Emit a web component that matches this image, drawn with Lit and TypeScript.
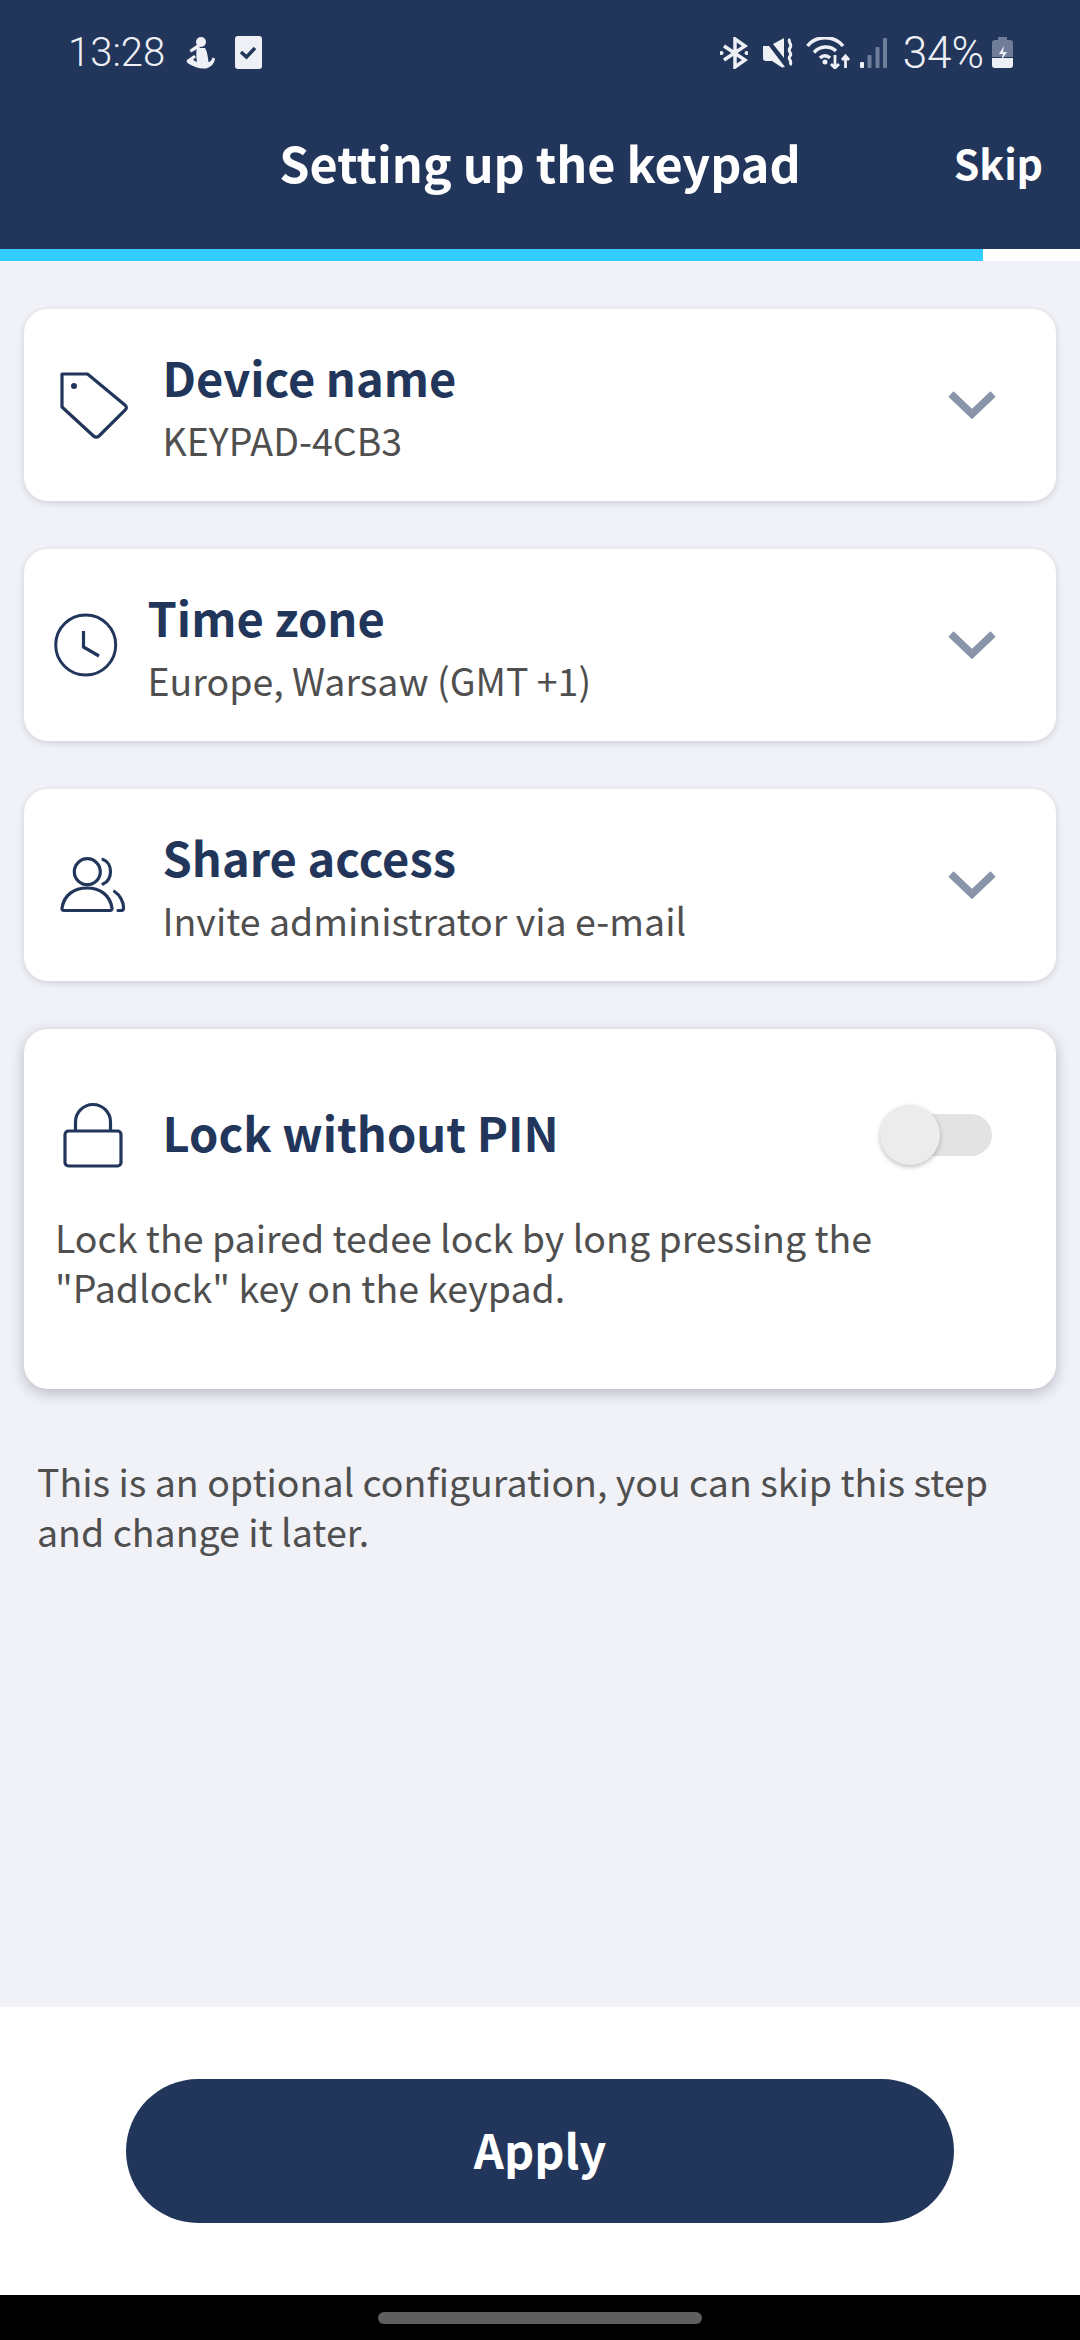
import { LitElement, html, css, svg } from "lit";
import { customElement } from "lit/decorators.js";

const tagIcon = svg`
  <path d="M14 17H39.5L77.5 48.5a3 3 0 0 1 0 4.2L51 79a4 4 0 0 1-5.5 0L14 50Z" fill="none" stroke="#22365b" stroke-width="3.2" stroke-linejoin="round"/>
  <circle cx="26" cy="29" r="3" fill="#22365b"/>`;

const clockIcon = svg`
  <circle cx="37.7" cy="48" r="30" fill="none" stroke="#22365b" stroke-width="3"/>
  <path d="M35.5 34V50L51 59" fill="none" stroke="#22365b" stroke-width="3.2"/>`;

const peopleIcon = svg`
  <g fill="none" stroke="#22365b" stroke-width="3.2" stroke-linecap="round">
    <circle cx="39.3" cy="34.7" r="13"/>
    <path d="M16 73.5H62a2 2 0 0 0 2-2.5C62 58 52 51 39 51S16 58 14 71a2 2 0 0 0 2 2.5Z"/>
    <path d="M55 22.5C65 26 65 43 55 47"/>
    <path d="M66.5 54.5C72 58 75.5 65 75.5 70.5c0 2-.5 3-2 3H70"/>
  </g>`;

const lockIcon = svg`
  <g fill="none" stroke="#22365b" stroke-width="3.2">
    <rect x="17" y="44" width="56" height="35" rx="3.5"/>
    <path d="M27.5 44V35a17.5 17.5 0 0 1 35 0V44"/>
  </g>`;

const rows = [
  { icon: tagIcon, title: "Device name", sub: "KEYPAD-4CB3", narrow: false },
  { icon: clockIcon, title: "Time zone", sub: "Europe, Warsaw (GMT +1)", narrow: true },
  { icon: peopleIcon, title: "Share access", sub: "Invite administrator via e-mail", narrow: false },
];

@customElement("app-root")
export class AppRoot extends LitElement {
  static styles = css`
    :host {
      display: flex;
      flex-direction: column;
      width: 1080px;
      height: 2340px;
      background: #f1f2f7;
      font-family: "Noto Sans CJK SC", "Noto Sans", sans-serif;
      overflow: hidden;
    }
    .top {
      background: #22365b;
      color: #fff;
      height: 249px;
      flex: none;
    }
    .status {
      height: 105px;
      display: flex;
      align-items: center;
      padding: 0 67px 0 68px;
      color: #eef0f6;
      font: 300 40px Roboto, sans-serif;
    }
    .status svg {
      display: block;
      flex: none;
    }
    .status .left {
      display: flex;
      align-items: center;
      gap: 19px;
      margin-right: auto;
    }
    .status .time {
      margin-right: 2px;
    }
    .status .right {
      display: flex;
      align-items: center;
    }
    .status .mute {
      margin-left: 15px;
    }
    .status .wifi {
      margin-left: 13px;
    }
    .status .signal {
      margin-left: 10px;
    }
    .status .pct {
      margin: 0 8px 0 16px;
      font-size: 44px;
    }
    .bar {
      display: grid;
      grid-template-columns: 1fr auto 1fr;
      align-items: center;
      height: 114px;
    }
    .bar h1 {
      margin: 0;
      font-size: 48.5px;
      font-weight: 700;
      line-height: 60px;
    }
    .bar .skip {
      justify-self: end;
      padding-right: 37px;
      font-size: 41px;
      font-weight: 700;
    }
    .progress {
      height: 12px;
      flex: none;
      background: #fff;
    }
    .progress div {
      width: 983px;
      height: 100%;
      background: #33ccff;
    }
    main {
      flex: 1;
      padding: 48px 24px 0;
      display: flex;
      flex-direction: column;
      gap: 48px;
    }
    .card {
      background: #fff;
      border-radius: 24px;
      box-shadow: 0 2px 7px rgba(30, 30, 60, 0.16);
    }
    .row {
      height: 192px;
      display: flex;
      align-items: center;
      padding: 0 60px 0 24px;
    }
    .icon {
      display: block;
      flex: none;
      width: 116px;
      height: 96px;
    }
    .icon.narrow {
      width: 101px;
    }
    .text {
      flex: 1;
      margin-left: -1.5px;
      padding-bottom: 2px;
    }
    .title {
      color: #22365b;
      font-size: 47px;
      font-weight: 700;
      line-height: 62px;
    }
    .sub {
      margin-top: 9px;
      color: #4f4f4f;
      font-size: 37.5px;
      line-height: 46px;
    }
    .chevron {
      display: block;
      flex: none;
      width: 48px;
      height: 30px;
    }
    .pin {
      height: 360px;
      box-shadow: 0 4px 14px rgba(30, 30, 60, 0.28);
    }
    .pin .head {
      display: flex;
      align-items: center;
      height: 96px;
      padding: 58px 64px 0 24px;
    }
    .pin .title {
      flex: 1;
      margin-left: -1.5px;
      padding-bottom: 6px;
    }
    .toggle {
      position: relative;
      flex: none;
      width: 106px;
      height: 42px;
      border-radius: 21px;
      background: #e3e3e3;
    }
    .knob {
      position: absolute;
      left: -6px;
      top: -9px;
      width: 60px;
      height: 60px;
      border-radius: 50%;
      background: #ececec;
      box-shadow: 0 2px 5px rgba(0, 0, 0, 0.25);
    }
    .pin p {
      margin: 29px 0 0;
      padding: 0 31px;
      color: #4f4f4f;
      font-size: 37.5px;
      line-height: 50px;
    }
    .note {
      margin: 19px 0 0;
      padding: 0 13px;
      color: #4f4f4f;
      font-size: 37.5px;
      line-height: 50px;
    }
    footer {
      flex: none;
      height: 288px;
      box-sizing: border-box;
      background: #fff;
      padding: 72px 126px 0;
    }
    button {
      display: block;
      width: 100%;
      height: 144px;
      padding: 0 0 6px;
      border: none;
      border-radius: 72px;
      background: #22365b;
      color: #fff;
      font-family: inherit;
      font-size: 47px;
      font-weight: 700;
    }
    .nav {
      flex: none;
      height: 45px;
      background: #000;
      display: flex;
      justify-content: center;
      padding-top: 17px;
      box-sizing: border-box;
    }
    .nav div {
      width: 324px;
      height: 12px;
      border-radius: 6px;
      background: #5f5f5f;
    }
  `;

  renderStatus() {
    return html`
      <div class="status">
        <div class="left">
          <span class="time">13:28</span>
          <svg width="30" height="32" viewBox="0 0 30 32" fill="#eef0f6">
            <circle cx="15" cy="5" r="5"/>
            <path d="M12 7L3.5 13l1.5 2.5 9-5z"/>
            <path d="M11 11L19 11C21 14 22 20 22.5 25C24 25 26 23 26.5 20.5L29 21.5C28.5 27 24 31 19 31.5C14 32 8 30 3 27C1 26 0 24 1 23L8 18L10 20L7 23L11 25C10 20 10 15 11 11Z"/>
          </svg>
          <svg width="27" height="33" viewBox="0 0 27 33">
            <rect width="27" height="33" rx="3" fill="#eef0f6"/>
            <path d="M6 16l5.5 5L20 12" fill="none" stroke="#22365b" stroke-width="3.5"/>
          </svg>
        </div>
        <div class="right">
          <svg width="28" height="32" viewBox="0 0 28 32" fill="none" stroke="#eef0f6" stroke-width="3.5">
            <path d="M4 9L25 23 15 30V2L25 9 4 23"/>
            <circle cx="1.5" cy="16" r="2" fill="#eef0f6" stroke="none"/>
            <circle cx="26.5" cy="16" r="2" fill="#eef0f6" stroke="none"/>
          </svg>
          <svg class="mute" width="30" height="31" viewBox="0 0 30 31" fill="#eef0f6">
            <path d="M0 9H6L22 30L19 30.500L9 24H3a3 3 0 0 1-3-3z"/>
            <path d="M10 7L21 1V21z"/>
            <path d="M27 2c-3 3 3 5 0 9s3 5 0 8 3 5 0 9" fill="none" stroke="#eef0f6" stroke-width="3"/>
          </svg>
          <svg class="wifi" width="44" height="32" viewBox="0 0 44 32" fill="none" stroke="#eef0f6" stroke-width="3.5">
            <path d="M1.5 9C10-2 28-2 37 9"/>
            <path d="M8 15.5C14 8.5 24 8.5 30 14"/>
            <path d="M14 21c3-3 7-3 10 0"/>
            <circle cx="19" cy="25" r="2.5" fill="#eef0f6" stroke="none"/>
            <path d="M29 18V31M25 27l4 4 4-4M39.5 31V19M36 23l3.500-4 3.500 4" stroke-width="2.8"/>
          </svg>
          <svg class="signal" width="27" height="30" viewBox="0 0 27 30">
            <rect x="0" y="24" width="4" height="6" rx="1" fill="#eef0f6"/>
            <rect x="7.5" y="17" width="4" height="13" rx="1" fill="#6f7d99"/>
            <rect x="15.5" y="9" width="4" height="21" rx="1" fill="#6f7d99"/>
            <rect x="23" y="0" width="4" height="30" rx="1" fill="#6f7d99"/>
          </svg>
          <span class="pct">34%</span>
          <svg width="21" height="31" viewBox="0 0 21 31">
            <path d="M6 0h9v3h3a3 3 0 0 1 3 3v14H0V6a3 3 0 0 1 3-3h3z" fill="#6f7d99"/>
            <path d="M0 21h21v7a3 3 0 0 1-3 3H3a3 3 0 0 1-3-3z" fill="#eef0f6"/>
            <path d="M12 9L7 17h4l-2 7 6-9h-4z" fill="#eef0f6"/>
          </svg>
        </div>
      </div>
    `;
  }

  render() {
    return html`
      <div class="top">
        ${this.renderStatus()}
        <div class="bar">
          <span></span>
          <h1>Setting up the keypad</h1>
          <span class="skip">Skip</span>
        </div>
      </div>
      <div class="progress"><div></div></div>
      <main>
        ${rows.map(
          (r) => html`
            <div class="card row">
              <svg class="icon ${r.narrow ? "narrow" : ""}" viewBox="0 0 ${r.narrow ? 101 : 116} 96">${r.icon}</svg>
              <div class="text">
                <div class="title">${r.title}</div>
                <div class="sub">${r.sub}</div>
              </div>
              <svg class="chevron" viewBox="0 0 48 30">
                <path d="M3 4L24 24 45 4" fill="none" stroke="#8a94a8" stroke-width="7.5"/>
              </svg>
            </div>
          `
        )}
        <div class="card pin">
          <div class="head">
            <svg class="icon" viewBox="0 0 116 96">${lockIcon}</svg>
            <div class="title">Lock without PIN</div>
            <div class="toggle"><div class="knob"></div></div>
          </div>
          <p>Lock the paired tedee lock by long pressing the "Padlock" key on the keypad.</p>
        </div>
        <p class="note">This is an optional configuration, you can skip this step and change it later.</p>
      </main>
      <footer><button>Apply</button></footer>
      <div class="nav"><div></div></div>
    `;
  }
}
